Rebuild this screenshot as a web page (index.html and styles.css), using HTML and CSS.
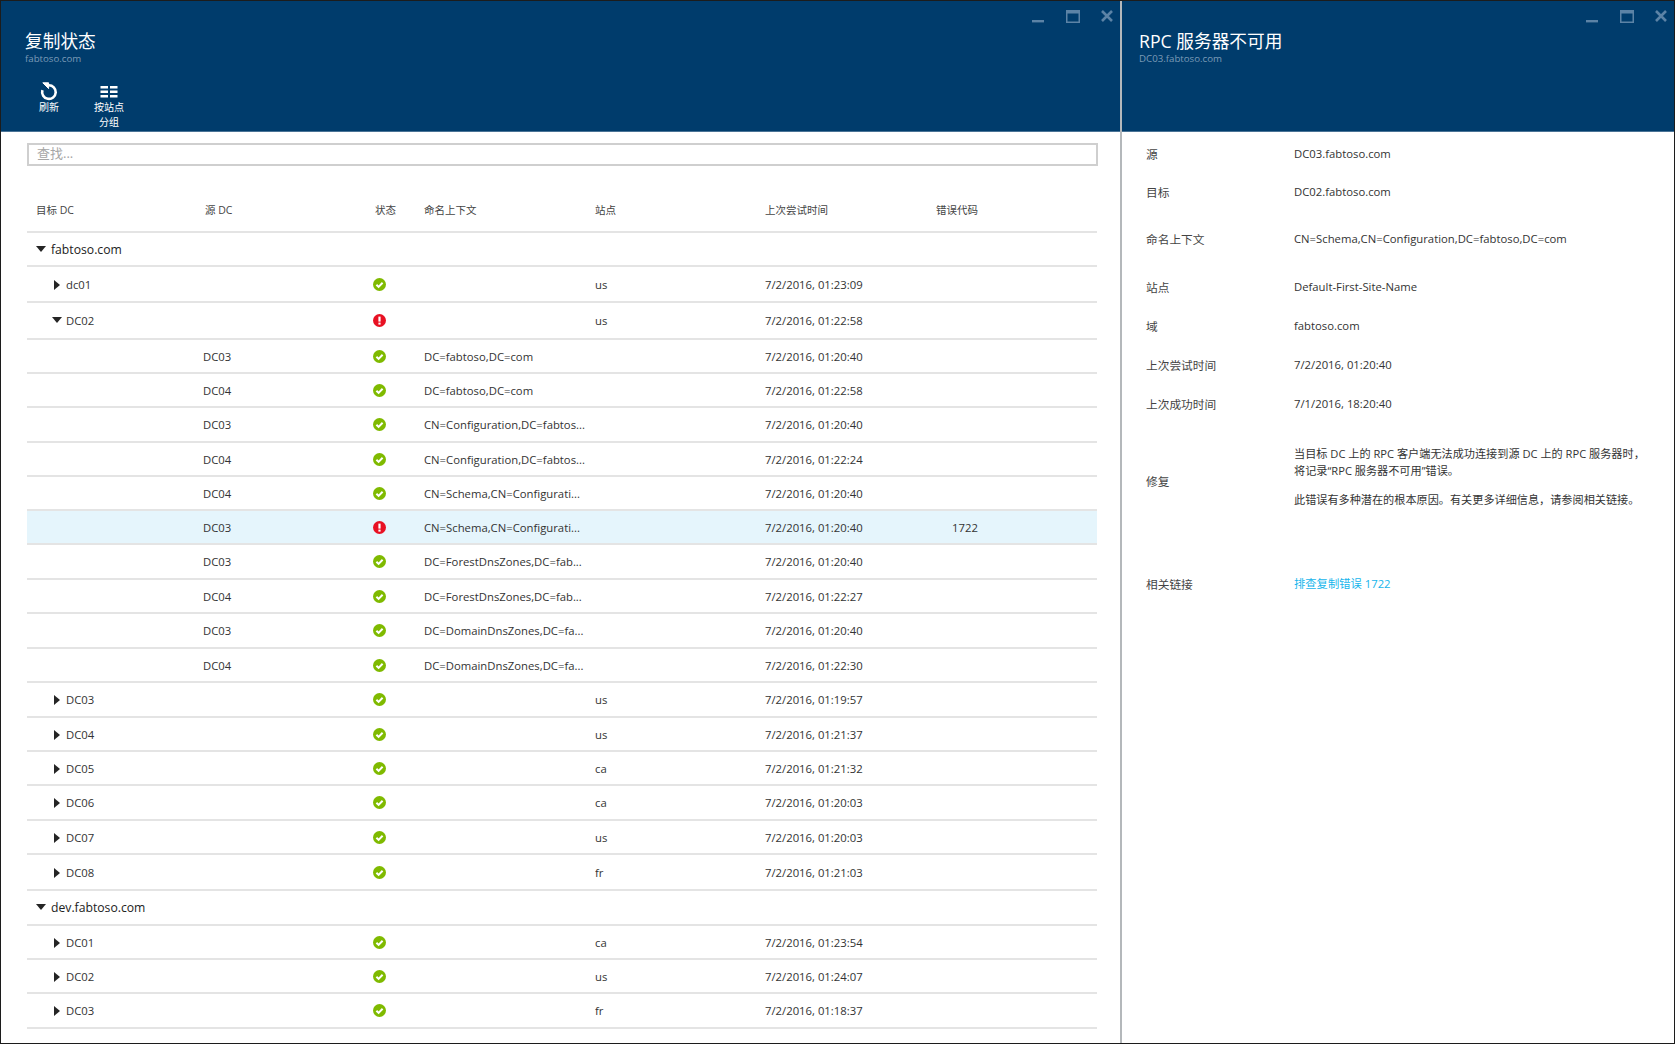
FILE: index.html
```html
<!DOCTYPE html>
<html lang="zh-CN">
	<head>
		<meta charset="UTF-8" />
		<title>复制状态</title>
		<link rel="stylesheet" href="styles.css">
	</head>
	<body>
		<svg class="defs" xmlns="http://www.w3.org/2000/svg">
			<symbol id="ok" viewBox="0 0 13 13">
				<circle cx="6.5" cy="6.5" r="6.5" fill="#7fba00" />
				<path d="M3.4 6.700l2.200 2.200 4-4.200" fill="none" stroke="#fff" stroke-width="2" />
			</symbol>
			<symbol id="err" viewBox="0 0 13 13">
				<circle cx="6.5" cy="6.5" r="6.5" fill="#e81123" />
				<rect x="5.4" y="2.6" width="2.2" height="5" fill="#fff" />
				<rect x="5.4" y="8.6" width="2.2" height="2" fill="#fff" />
			</symbol>
			<symbol id="open" viewBox="0 0 10 6"><path d="M0 0h10L5 6z" fill="#252525" /></symbol>
			<symbol id="closed" viewBox="0 0 6 10"><path d="M0 0l6 5-6 5z" fill="#252525" /></symbol>
			<symbol id="winctl" viewBox="0 0 81 13">
				<rect x="0" y="10" width="12" height="2.4" fill="#5c83a6" />
				<path d="M34 0h14v13H34zM35.5 3.500v8h11v-8z" fill="#5c83a6" fill-rule="evenodd" />
				<path d="M70 1l10 10M80 1L70 11" stroke="#5c83a6" stroke-width="2.6" fill="none" />
			</symbol>
		</svg>

		<div class="blades">
			<section class="blade blade-main">
				<header class="head">
					<div class="head-top">
						<div>
							<h1 class="title">复制状态</h1>
							<div class="subtitle">fabtoso.com</div>
						</div>
						<svg class="winctl"><use href="#winctl" /></svg>
					</div>
					<div class="toolbar">
						<div class="cmd cmd-refresh">
							<svg class="cmd-icon" viewBox="0 0 20 20">
								<path d="M9.600 4.300A6.800 6.800 0 1 1 3.400 9.200" fill="none" stroke="#fff" stroke-width="2.6" />
								<path d="M3.800 1.800h5.800v5.800z" fill="#fff" stroke="#fff" stroke-width="1" />
							</svg>
							<span>刷新</span>
						</div>
						<div class="cmd cmd-group">
							<svg class="cmd-icon" viewBox="0 0 20 20">
								<path d="M1.500 5h7.500v2.500h-7.500zM11 5h7.500v2.500H11zM1.500 9.500h7.500V12h-7.500zM11 9.500h7.500V12H11zM1.500 14h7.500v2.500h-7.500zM11 14h7.500v2.500H11z" fill="#fff" />
							</svg>
							<span>按站点<br />分组</span>
						</div>
					</div>
				</header>
				<div class="content">
					<div class="search">查找...</div>
					<table class="grid">
						<colgroup>
							<col class="c-target" /><col class="c-source" /><col class="c-status" /><col class="c-naming" /><col class="c-site" /><col class="c-time" /><col />
						</colgroup>
						<thead>
							<tr>
								<th class="th-target">目标 DC</th>
								<th class="th-source">源 DC</th>
								<th class="th-status">状态</th>
								<th>命名上下文</th>
								<th>站点</th>
								<th>上次尝试时间</th>
								<th>错误代码</th>
							</tr>
						</thead>
						<tbody>
							<tr class="group"><td colspan="7"><svg class="tw-open"><use href="#open" /></svg>fabtoso.com</td></tr>
							<tr class="h36"><td class="dc"><svg class="tw-closed"><use href="#closed" /></svg>dc01</td><td></td><td><svg class="st"><use href="#ok" /></svg></td><td></td><td>us</td><td>7/2/2016, 01:23:09</td><td></td></tr>
							<tr class="h37"><td class="dc"><svg class="tw-open tw-small"><use href="#open" /></svg>DC02</td><td></td><td><svg class="st"><use href="#err" /></svg></td><td></td><td>us</td><td>7/2/2016, 01:22:58</td><td></td></tr>
							<tr><td></td><td>DC03</td><td><svg class="st"><use href="#ok" /></svg></td><td>DC=fabtoso,DC=com</td><td></td><td>7/2/2016, 01:20:40</td><td></td></tr>
							<tr><td></td><td>DC04</td><td><svg class="st"><use href="#ok" /></svg></td><td>DC=fabtoso,DC=com</td><td></td><td>7/2/2016, 01:22:58</td><td></td></tr>
							<tr class="h35"><td></td><td>DC03</td><td><svg class="st"><use href="#ok" /></svg></td><td>CN=Configuration,DC=fabtos...</td><td></td><td>7/2/2016, 01:20:40</td><td></td></tr>
							<tr><td></td><td>DC04</td><td><svg class="st"><use href="#ok" /></svg></td><td>CN=Configuration,DC=fabtos...</td><td></td><td>7/2/2016, 01:22:24</td><td></td></tr>
							<tr><td></td><td>DC04</td><td><svg class="st"><use href="#ok" /></svg></td><td>CN=Schema,CN=Configurati...</td><td></td><td>7/2/2016, 01:20:40</td><td></td></tr>
							<tr class="selected"><td></td><td>DC03</td><td><svg class="st"><use href="#err" /></svg></td><td>CN=Schema,CN=Configurati...</td><td></td><td>7/2/2016, 01:20:40</td><td class="code">1722</td></tr>
							<tr class="h35"><td></td><td>DC03</td><td><svg class="st"><use href="#ok" /></svg></td><td>DC=ForestDnsZones,DC=fab...</td><td></td><td>7/2/2016, 01:20:40</td><td></td></tr>
							<tr><td></td><td>DC04</td><td><svg class="st"><use href="#ok" /></svg></td><td>DC=ForestDnsZones,DC=fab...</td><td></td><td>7/2/2016, 01:22:27</td><td></td></tr>
							<tr class="h35"><td></td><td>DC03</td><td><svg class="st"><use href="#ok" /></svg></td><td>DC=DomainDnsZones,DC=fa...</td><td></td><td>7/2/2016, 01:20:40</td><td></td></tr>
							<tr><td></td><td>DC04</td><td><svg class="st"><use href="#ok" /></svg></td><td>DC=DomainDnsZones,DC=fa...</td><td></td><td>7/2/2016, 01:22:30</td><td></td></tr>
							<tr class="h35"><td class="dc"><svg class="tw-closed"><use href="#closed" /></svg>DC03</td><td></td><td><svg class="st"><use href="#ok" /></svg></td><td></td><td>us</td><td>7/2/2016, 01:19:57</td><td></td></tr>
							<tr><td class="dc"><svg class="tw-closed"><use href="#closed" /></svg>DC04</td><td></td><td><svg class="st"><use href="#ok" /></svg></td><td></td><td>us</td><td>7/2/2016, 01:21:37</td><td></td></tr>
							<tr><td class="dc"><svg class="tw-closed"><use href="#closed" /></svg>DC05</td><td></td><td><svg class="st"><use href="#ok" /></svg></td><td></td><td>ca</td><td>7/2/2016, 01:21:32</td><td></td></tr>
							<tr class="h35"><td class="dc"><svg class="tw-closed"><use href="#closed" /></svg>DC06</td><td></td><td><svg class="st"><use href="#ok" /></svg></td><td></td><td>ca</td><td>7/2/2016, 01:20:03</td><td></td></tr>
							<tr><td class="dc"><svg class="tw-closed"><use href="#closed" /></svg>DC07</td><td></td><td><svg class="st"><use href="#ok" /></svg></td><td></td><td>us</td><td>7/2/2016, 01:20:03</td><td></td></tr>
							<tr class="h36"><td class="dc"><svg class="tw-closed"><use href="#closed" /></svg>DC08</td><td></td><td><svg class="st"><use href="#ok" /></svg></td><td></td><td>fr</td><td>7/2/2016, 01:21:03</td><td></td></tr>
							<tr class="group h35"><td colspan="7"><svg class="tw-open"><use href="#open" /></svg>dev.fabtoso.com</td></tr>
							<tr><td class="dc"><svg class="tw-closed"><use href="#closed" /></svg>DC01</td><td></td><td><svg class="st"><use href="#ok" /></svg></td><td></td><td>ca</td><td>7/2/2016, 01:23:54</td><td></td></tr>
							<tr><td class="dc"><svg class="tw-closed"><use href="#closed" /></svg>DC02</td><td></td><td><svg class="st"><use href="#ok" /></svg></td><td></td><td>us</td><td>7/2/2016, 01:24:07</td><td></td></tr>
							<tr class="h35"><td class="dc"><svg class="tw-closed"><use href="#closed" /></svg>DC03</td><td></td><td><svg class="st"><use href="#ok" /></svg></td><td></td><td>fr</td><td>7/2/2016, 01:18:37</td><td></td></tr>
						</tbody>
					</table>
				</div>
			</section>

			<section class="blade blade-detail">
				<header class="head">
					<div class="head-top">
						<div>
							<h1 class="title">RPC 服务器不可用</h1>
							<div class="subtitle">DC03.fabtoso.com</div>
						</div>
						<svg class="winctl"><use href="#winctl" /></svg>
					</div>
				</header>
				<dl class="props">
					<dt class="p-source">源</dt><dd class="p-source">DC03.fabtoso.com</dd>
					<dt class="p-target">目标</dt><dd class="p-target">DC02.fabtoso.com</dd>
					<dt class="p-naming">命名上下文</dt><dd class="p-naming">CN=Schema,CN=Configuration,DC=fabtoso,DC=com</dd>
					<dt class="p-plain">站点</dt><dd class="p-plain">Default-First-Site-Name</dd>
					<dt class="p-plain">域</dt><dd class="p-plain">fabtoso.com</dd>
					<dt class="p-plain">上次尝试时间</dt><dd class="p-plain">7/2/2016, 01:20:40</dd>
					<dt class="p-plain">上次成功时间</dt><dd class="p-plain">7/1/2016, 18:20:40</dd>
					<dt class="p-fix">修复</dt>
					<dd class="p-fix">
						<p>当目标 DC 上的 RPC 客户端无法成功连接到源 DC 上的 RPC 服务器时，将记录“RPC 服务器不可用”错误。</p>
						<p>此错误有多种潜在的根本原因。有关更多详细信息，请参阅相关链接。</p>
					</dd>
					<dt class="p-link">相关链接</dt><dd class="p-link"><a href="#">排查复制错误 1722</a></dd>
				</dl>
			</section>
		</div>
	</body>
</html>
```

FILE: styles.css
```css
body {
	margin: 0;
	font-family: 'Open Sans', 'Noto Sans CJK SC', sans-serif;
	font-size: 11.3px;
	color: #333;
	background-color: #fff;
	overflow: hidden;
}

.defs {
	display: none;
}

.blades {
	display: flex;
	height: 1044px;
	box-sizing: border-box;
	border: 1px solid #1c1c1c;
}

.blade {
	min-width: 0;
}

.blade-main {
	width: 1119px;
	border-right: 2px solid #b4b8bb;
}

.blade-detail {
	flex: 1;
	min-width: 0;
}

.head {
	height: 131px;
	box-sizing: border-box;
	background-color: #003c6c;
	border-bottom: 1px solid #4a7396;
	color: #fff;
}

.head-top {
	display: flex;
	justify-content: space-between;
	height: 69px;
	padding-left: 24px;
}

.blade-detail .head-top {
	padding-left: 17px;
}

.title {
	margin: 29px 0 0;
	font-size: 17.700px;
	font-weight: 400;
	line-height: 22px;
}

.subtitle {
	margin-top: 0;
	font-size: 9.700px;
	line-height: 14px;
	color: #7b9bb7;
}

.winctl {
	width: 81px;
	height: 13px;
	margin: 9px 7px 0 0;
}

.toolbar {
	display: flex;
	padding-left: 30px;
}

.cmd {
	display: flex;
	flex-direction: column;
	align-items: center;
	font-size: 10px;
	line-height: 15px;
	text-align: center;
}

.cmd-refresh {
	width: 36px;
}

.cmd-group {
	width: 36px;
	margin-left: 24px;
}

.cmd-icon {
	display: block;
	width: 20px;
	height: 20px;
	margin-top: 11px;
	margin-bottom: -1px;
}

.content {
	padding: 11px 22px 0 26px;
}

.search {
	height: 23px;
	box-sizing: border-box;
	border: 2px solid #cfcfcf;
	padding-left: 8px;
	font-size: 13px;
	line-height: 16px;
	color: #a6a6a6;
}

.grid {
	width: 1070px;
	table-layout: fixed;
	border-collapse: separate;
	border-spacing: 0;
}

.c-target {
	width: 176px;
}

.c-source {
	width: 169px;
}

.c-status {
	width: 52px;
}

.c-naming {
	width: 171px;
}

.c-site {
	width: 170px;
}

.c-time {
	width: 171px;
}

.grid th {
	height: 67px;
	box-sizing: border-box;
	padding: 22px 0 0;
	border-bottom: 2px solid #e4e4e4;
	font-size: 10.500px;
	font-weight: 400;
	text-align: left;
	color: #444;
}

.grid .th-target {
	padding-left: 9px;
}

.grid .th-source {
	padding-left: 2px;
}

.grid .th-status {
	padding-left: 3px;
}

.grid td {
	height: 34px;
	box-sizing: border-box;
	padding: 0;
	border-bottom: 2px solid #e4e4e4;
	white-space: nowrap;
	overflow: hidden;
}

.grid .h35 td {
	height: 35px;
}

.grid .h36 td {
	height: 36px;
}

.grid .h37 td {
	height: 37px;
}

.grid .group td {
	padding-left: 9px;
	font-size: 12.200px;
	color: #222;
}

.grid td.dc {
	padding-left: 27px;
}

.grid td.code {
	padding-left: 16px;
}

.grid .selected td {
	background-color: #e5f5fc;
}

.st {
	display: block;
	width: 13px;
	height: 13px;
	margin-left: 1px;
}

.tw-open {
	width: 10px;
	height: 6px;
	margin-right: 5px;
	vertical-align: 2px;
}

.tw-open.tw-small {
	margin-left: -2px;
	margin-right: 4px;
}

.tw-closed {
	width: 6px;
	height: 10px;
	margin-right: 6px;
	vertical-align: -1px;
}

.props {
	display: grid;
	grid-template-columns: 148px 1fr;
	margin: 0;
	padding: 0 20px 0 24px;
}

.props dt,
.props dd {
	margin: 0;
	display: flex;
}

.props dt {
	align-items: center;
	font-size: 11.700px;
	color: #444;
}

.props dd {
	color: #333;
	flex-direction: column;
	align-items: flex-start;
	justify-content: center;
}

.p-source {
	height: 42px;
}

.p-target {
	height: 35px;
}

.p-naming {
	height: 58px;
}

.p-plain {
	height: 39px;
}

.p-fix {
	height: 114px;
}

.p-link {
	height: 92px;
}

.props dd.p-fix {
	box-sizing: border-box;
	padding-top: 4px;
	font-size: 11.150px;
}

.p-fix p {
	max-width: 355px;
	margin: 0 0 12px;
	line-height: 17px;
}

.p-link a {
	color: #15b5ec;
	text-decoration: none;
}
```
